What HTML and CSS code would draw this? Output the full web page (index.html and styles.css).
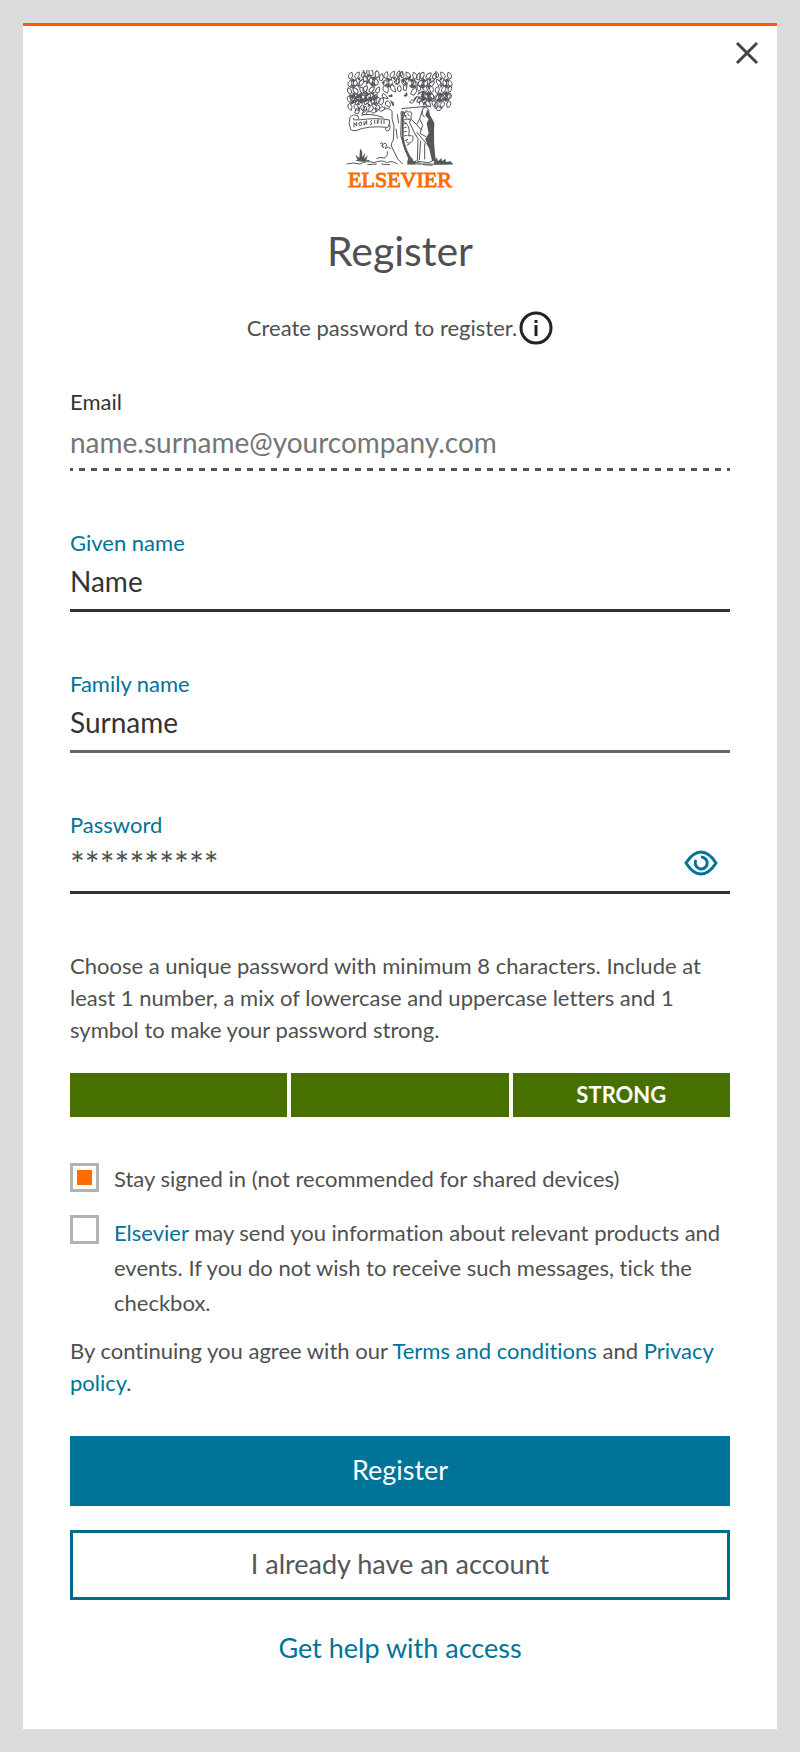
FILE: index.html
```html
<!DOCTYPE html>
<html lang="en">
<head>
  <meta charset="UTF-8">
  <meta name="viewport" content="width=device-width, initial-scale=1.0">
  <title>Register</title>
  <link rel="stylesheet" href="styles.css">
</head>
<body>
  <main class="card">
    <button class="close" type="button" aria-label="Close">
      <svg width="24" height="24" viewBox="0 0 24 24"><path d="M2 2L22 22M22 2L2 22"/></svg>
    </button>

    <div class="logo">
      <svg width="108" height="96" viewBox="0 0 324 288">
        <defs>
          <g id="leaves">
            <path d="M4 20Q2 6 14 3Q20 14 10 24ZM22 18Q22 4 36 2Q38 14 28 22ZM42 16Q40 6 50 0Q58 10 48 20Z"/>
            <path d="M2 42Q0 30 12 27Q18 38 8 47ZM20 42Q14 28 26 25Q34 34 26 44ZM36 38Q34 26 48 24Q52 34 42 43Z"/>
            <path d="M10 24L20 32L28 22M26 44L34 34L44 26M8 47L16 50L26 44"/>
            <path class="gap" d="M14 22L21 25L17 31ZM31 22L38 19L36 27ZM12 44L19 39L20 49ZM30 42L36 40L35 48Z"/>
          </g>
        </defs>
        <g class="line">
          <use href="#leaves" x="4" y="4"/>
          <use href="#leaves" transform="translate(106 2) rotate(12) scale(-1 1)"/>
          <use href="#leaves" x="110" y="2"/>
          <use href="#leaves" transform="translate(216 4) scale(-1 1)"/>
          <use href="#leaves" transform="translate(220 2) rotate(8)"/>
          <use href="#leaves" transform="translate(320 4) scale(-1 1)"/>
          <use href="#leaves" transform="translate(56 46) rotate(-8) scale(-1 1)"/>
          <use href="#leaves" transform="translate(50 42) rotate(10)"/>
          <use href="#leaves" transform="translate(266 44) scale(-1 1)"/>
          <use href="#leaves" x="264" y="46"/>
          <use href="#leaves" transform="translate(2 124) scale(1 -1)"/>
          <use href="#leaves" transform="translate(104 128) rotate(180)"/>
          <use href="#leaves" transform="translate(218 116) rotate(-6) scale(1 -1)"/>
          <use href="#leaves" transform="translate(318 116) rotate(180)"/>
          <path d="M26 128Q28 114 40 112Q44 122 36 132ZM48 132Q52 118 62 118Q68 126 58 134ZM74 124Q82 112 94 116Q92 128 80 130ZM98 118Q106 106 118 112Q114 124 104 124ZM270 114Q280 104 290 112Q284 124 274 122Z"/>
        </g>
        <!-- trunk and branches -->
        <path class="wood" d="M144 132Q146 104 130 88L106 64L112 60L138 80L150 92L152 68L138 34L143 34L160 68L162 84L176 66L188 34L192 36L184 74L170 96L200 84L226 68L228 71L200 91L178 108L214 102L248 110L166 116L164 196L178 236L194 280L154 280Q132 256 138 216Z"/>
        <g class="line">
          <!-- inner leaves around the branches -->
          <path d="M138 62Q128 50 138 42Q148 50 150 66ZM172 60Q170 44 180 36Q186 50 180 62ZM194 72Q196 56 210 52Q216 66 204 76ZM112 62Q108 46 120 44Q132 54 124 70Z"/>
          <path d="M96 98Q98 84 112 84Q116 96 106 106ZM196 50Q196 38 208 34Q214 44 204 52ZM212 96Q214 82 228 78Q232 90 222 98ZM150 40Q148 24 158 20Q166 30 158 42ZM100 30Q98 16 108 10Q116 22 108 32ZM212 28Q210 14 220 8Q228 18 220 30ZM118 104Q116 92 126 92Q138 102 130 112Z"/>
          <path d="M154 60Q152 48 162 46Q170 56 162 66ZM190 96Q196 88 206 90Q204 98 196 100ZM110 82Q106 74 112 70Q124 78 126 86ZM158 16Q160 6 170 4Q172 14 164 20Z"/>
          <path class="gap" d="M128 78L138 74L138 80ZM174 78L182 68L183 78ZM206 84L214 79L206 90ZM232 100L240 92L238 104ZM168 34L174 24L174 38ZM108 38L114 32L114 42ZM184 26L192 18L192 30ZM134 92L142 98L142 108Z"/>
          <path d="M114 118Q132 112 138 124Q136 148 144 168L142 210Q136 216 136 228L148 252Q152 268 170 282M154 132L158 160M150 176L154 206"/>
          <path d="M166 116L250 108M168 122Q162 128 166 140L164 196L176 236L194 280"/>
          <path class="bark" d="M170 124V204Q176 244 202 278"/>
          <path d="M172 128L182 126M172 138L182 136M172 150L182 148M172 162L182 160M172 174L182 172M172 186L182 184M174 198L184 196M176 212L186 208M182 226L190 222"/>
          <path d="M170 152Q196 166 188 198M188 198Q206 192 200 212Q190 226 180 214"/>
          <!-- ribbon -->
          <path d="M12 142Q22 130 36 138Q42 150 28 150Q20 150 22 144M12 142Q6 160 14 178Q20 184 30 182Q64 166 126 172Q134 166 130 150Q96 142 36 150M120 172Q116 188 130 180Q136 164 126 164M46 136Q66 128 112 142"/>
          <path d="M24 172V158L32 168V156M40 166Q36 156 46 156Q50 166 42 168M54 154V166L62 152V164M72 164Q80 164 76 158Q70 154 78 150M86 162V150M94 162V150H100M94 156H100M106 162V150M114 162V150"/>
          <!-- hermit -->
          <path class="fill" d="M230 118Q238 106 248 118L250 136L262 156L264 270L248 278L214 274L216 206L204 186L190 156L196 148L212 164L222 144Z"/>
          <path class="ink" d="M244 118L252 136L265 160L263 218L270 276L258 272L250 238L238 208L248 190L242 160L248 148L238 136Z"/>
          <path d="M230 118L228 132L236 142M222 148L230 166L222 190L240 200M224 212L220 270M236 220V268M212 164L226 180M212 186L262 246"/>
          <path d="M176 126Q182 118 188 126Q196 122 198 132Q192 138 196 146Q184 152 180 142Q172 136 176 126ZM184 130L190 138M190 146L194 154"/>
          <!-- vine and ground -->
          <path d="M102 222Q108 214 112 222Q118 216 122 224L118 236Q130 226 134 238M106 226L114 234M110 222V232M124 244Q128 256 116 264Q100 260 92 266"/>
          <path d="M2 282Q22 276 42 282Q62 270 84 278Q108 268 124 278Q138 270 154 282M30 272Q52 266 70 272M64 284L92 282M106 282L132 284M194 282H320M204 276L224 280M264 276L314 280M230 284L260 286"/>
          <path class="ink" d="M36 274L28 254L40 264L42 236Q52 242 48 262L58 248L54 266L66 256L58 276ZM184 274L188 260L192 272L198 262L202 276L212 270L208 282L184 284ZM264 278L272 262L276 274L286 264L288 274L298 266L300 276L314 274L320 282L264 284Z"/>
        </g>
      </svg>
      <span class="logo-text">ELSEVIER</span>
    </div>

    <h1 class="title">Register</h1>
    <p class="intro">
      Create password to register.
      <button class="info" type="button" aria-label="More information">
        <svg width="34" height="34" viewBox="0 0 34 34">
          <circle cx="17" cy="17" r="15"/>
          <path d="M17 14V25M17 9V12"/>
        </svg>
      </button>
    </p>

    <form class="form">
      <div class="field field-locked">
        <label for="email">Email</label>
        <input id="email" type="email" value="name.surname@yourcompany.com" readonly>
      </div>
      <div class="field">
        <label for="given">Given name</label>
        <input id="given" type="text" value="Name">
      </div>
      <div class="field field-soft">
        <label for="family">Family name</label>
        <input id="family" type="text" value="Surname">
      </div>
      <div class="field field-password">
        <label for="password">Password</label>
        <div class="control">
          <input id="password" type="text" value="**********">
          <button class="eye" type="button" aria-label="Show password">
            <svg width="34" height="26" viewBox="0 0 34 26">
              <path d="M2 13Q9 2 17 2T32 13Q25 24 17 24T2 13Z"/>
              <path d="M12 10A6 6 0 1 0 17 7"/>
            </svg>
          </button>
        </div>
      </div>

      <p class="hint">Choose a unique password with minimum 8 characters. Include at least 1 number, a mix of lowercase and uppercase letters and 1 symbol to make your password strong.</p>
      <div class="strength">
        <span></span>
        <span></span>
        <span>STRONG</span>
      </div>

      <div class="check">
        <input id="stay" type="checkbox" checked>
        <label for="stay">Stay signed in (not recommended for shared devices)</label>
      </div>
      <div class="check check-long">
        <input id="news" type="checkbox">
        <label for="news"><a href="#">Elsevier</a> may send you information about relevant products and events. If you do not wish to receive such messages, tick the checkbox.</label>
      </div>

      <p class="terms">By continuing you agree with our <a href="#">Terms and conditions</a> and <a href="#">Privacy policy</a>.</p>

      <button class="btn btn-primary" type="submit">Register</button>
      <button class="btn btn-outline" type="button">I already have an account</button>
      <a class="help" href="#">Get help with access</a>
    </form>
  </main>
</body>
</html>
```
FILE: styles.css
```css
* {
  padding: 0;
  margin: 0;
  box-sizing: border-box;
}
body {
  padding: 23px;
  background-color: #dcdcdc;
  font-family: Lato, "Liberation Sans", sans-serif;
  font-size: 22px;
  font-variant-ligatures: none;
  line-height: 32px;
  color: #505050;
}
a {
  color: #007398;
  text-decoration: none;
}
button {
  border: 0;
  background: none;
  font-family: inherit;
  cursor: pointer;
}
svg {
  display: block;
  fill: none;
}
.card {
  position: relative;
  padding: 44px 47px 65px;
  border-top: 3px solid #ff5a00;
  background-color: #fff;
}
.close {
  position: absolute;
  top: 15px;
  right: 18px;
}
.close svg {
  stroke: #444;
  stroke-width: 3;
}

/* logo */
.logo {
  display: flex;
  flex-direction: column;
  align-items: center;
}
.line {
  fill: none;
  stroke: #53565a;
  stroke-width: 3;
}
.line .bark {
  stroke-width: 6;
}
.gap {
  fill: #53565a;
}
.ink {
  fill: #53565a;
  stroke: none;
}
.wood,
.fill {
  fill: #fff;
}
.logo-text {
  font-family: "Liberation Serif", serif;
  font-size: 22px;
  line-height: 28px;
  color: #ff6c00;
  -webkit-text-stroke: 1px #ff6c00;
}

.title {
  margin-top: 29px;
  font-size: 41px;
  font-weight: 400;
  line-height: 56px;
  text-align: center;
}
.intro {
  display: flex;
  justify-content: center;
  align-items: center;
  gap: 2px;
  margin-top: 32px;
}
.info svg {
  stroke: #222;
  stroke-width: 3;
}

/* fields */
.form {
  display: flex;
  flex-direction: column;
  margin-top: 41px;
}
.field {
  height: 85px;
  margin-bottom: 56px;
  border-bottom: 3px solid #333;
}
.field label {
  display: block;
  color: #007398;
}
.field input {
  width: 100%;
  height: 44px;
  border: 0;
  outline: 0;
  background: none;
  font-family: inherit;
  font-size: 28px;
  color: #333;
}
.field-soft {
  border-bottom-color: #666;
}
.field-locked {
  border-bottom: 0;
  background: linear-gradient(90deg, #555 3px, transparent 3px, transparent 9px, #555 9px) 0 100% / 12px 3px repeat-x;
}
.field-locked label {
  color: #333;
}
.field-locked input {
  height: 48px;
  color: #757575;
}
.control {
  display: flex;
  align-items: center;
}
.field-password input {
  font-size: 35px;
  color: #505050;
}
.eye {
  margin-right: 12px;
}
.eye svg {
  stroke: #007398;
  stroke-width: 3;
}

/* password strength */
.strength {
  display: flex;
  gap: 4px;
  margin: 27px 0 46px;
}
.strength span {
  flex: 1;
  height: 44px;
  background-color: #477000;
  font-weight: 700;
  line-height: 44px;
  text-align: center;
  color: #fff;
}

.check {
  display: flex;
  align-items: flex-start;
  gap: 15px;
  margin-bottom: 20px;
}
.check input {
  flex: none;
  width: 29px;
  height: 29px;
  border: 3px solid #b2b2b2;
  appearance: none;
}
.check input:checked {
  padding: 4px;
  background-color: #ff6c00;
  background-clip: content-box;
}
.check-long {
  margin-bottom: 15px;
}
.check-long label {
  line-height: 35px;
}

/* actions */
.btn {
  height: 70px;
  margin-bottom: 24px;
  padding-bottom: 4px;
  font-size: 27px;
}
.btn-primary {
  margin-top: 37px;
  background-color: #007398;
  color: #fff;
}
.btn-outline {
  border: 3px solid #00698c;
  color: #53565a;
}
.help {
  align-self: center;
  margin-top: 8px;
  font-size: 27px;
}
```
